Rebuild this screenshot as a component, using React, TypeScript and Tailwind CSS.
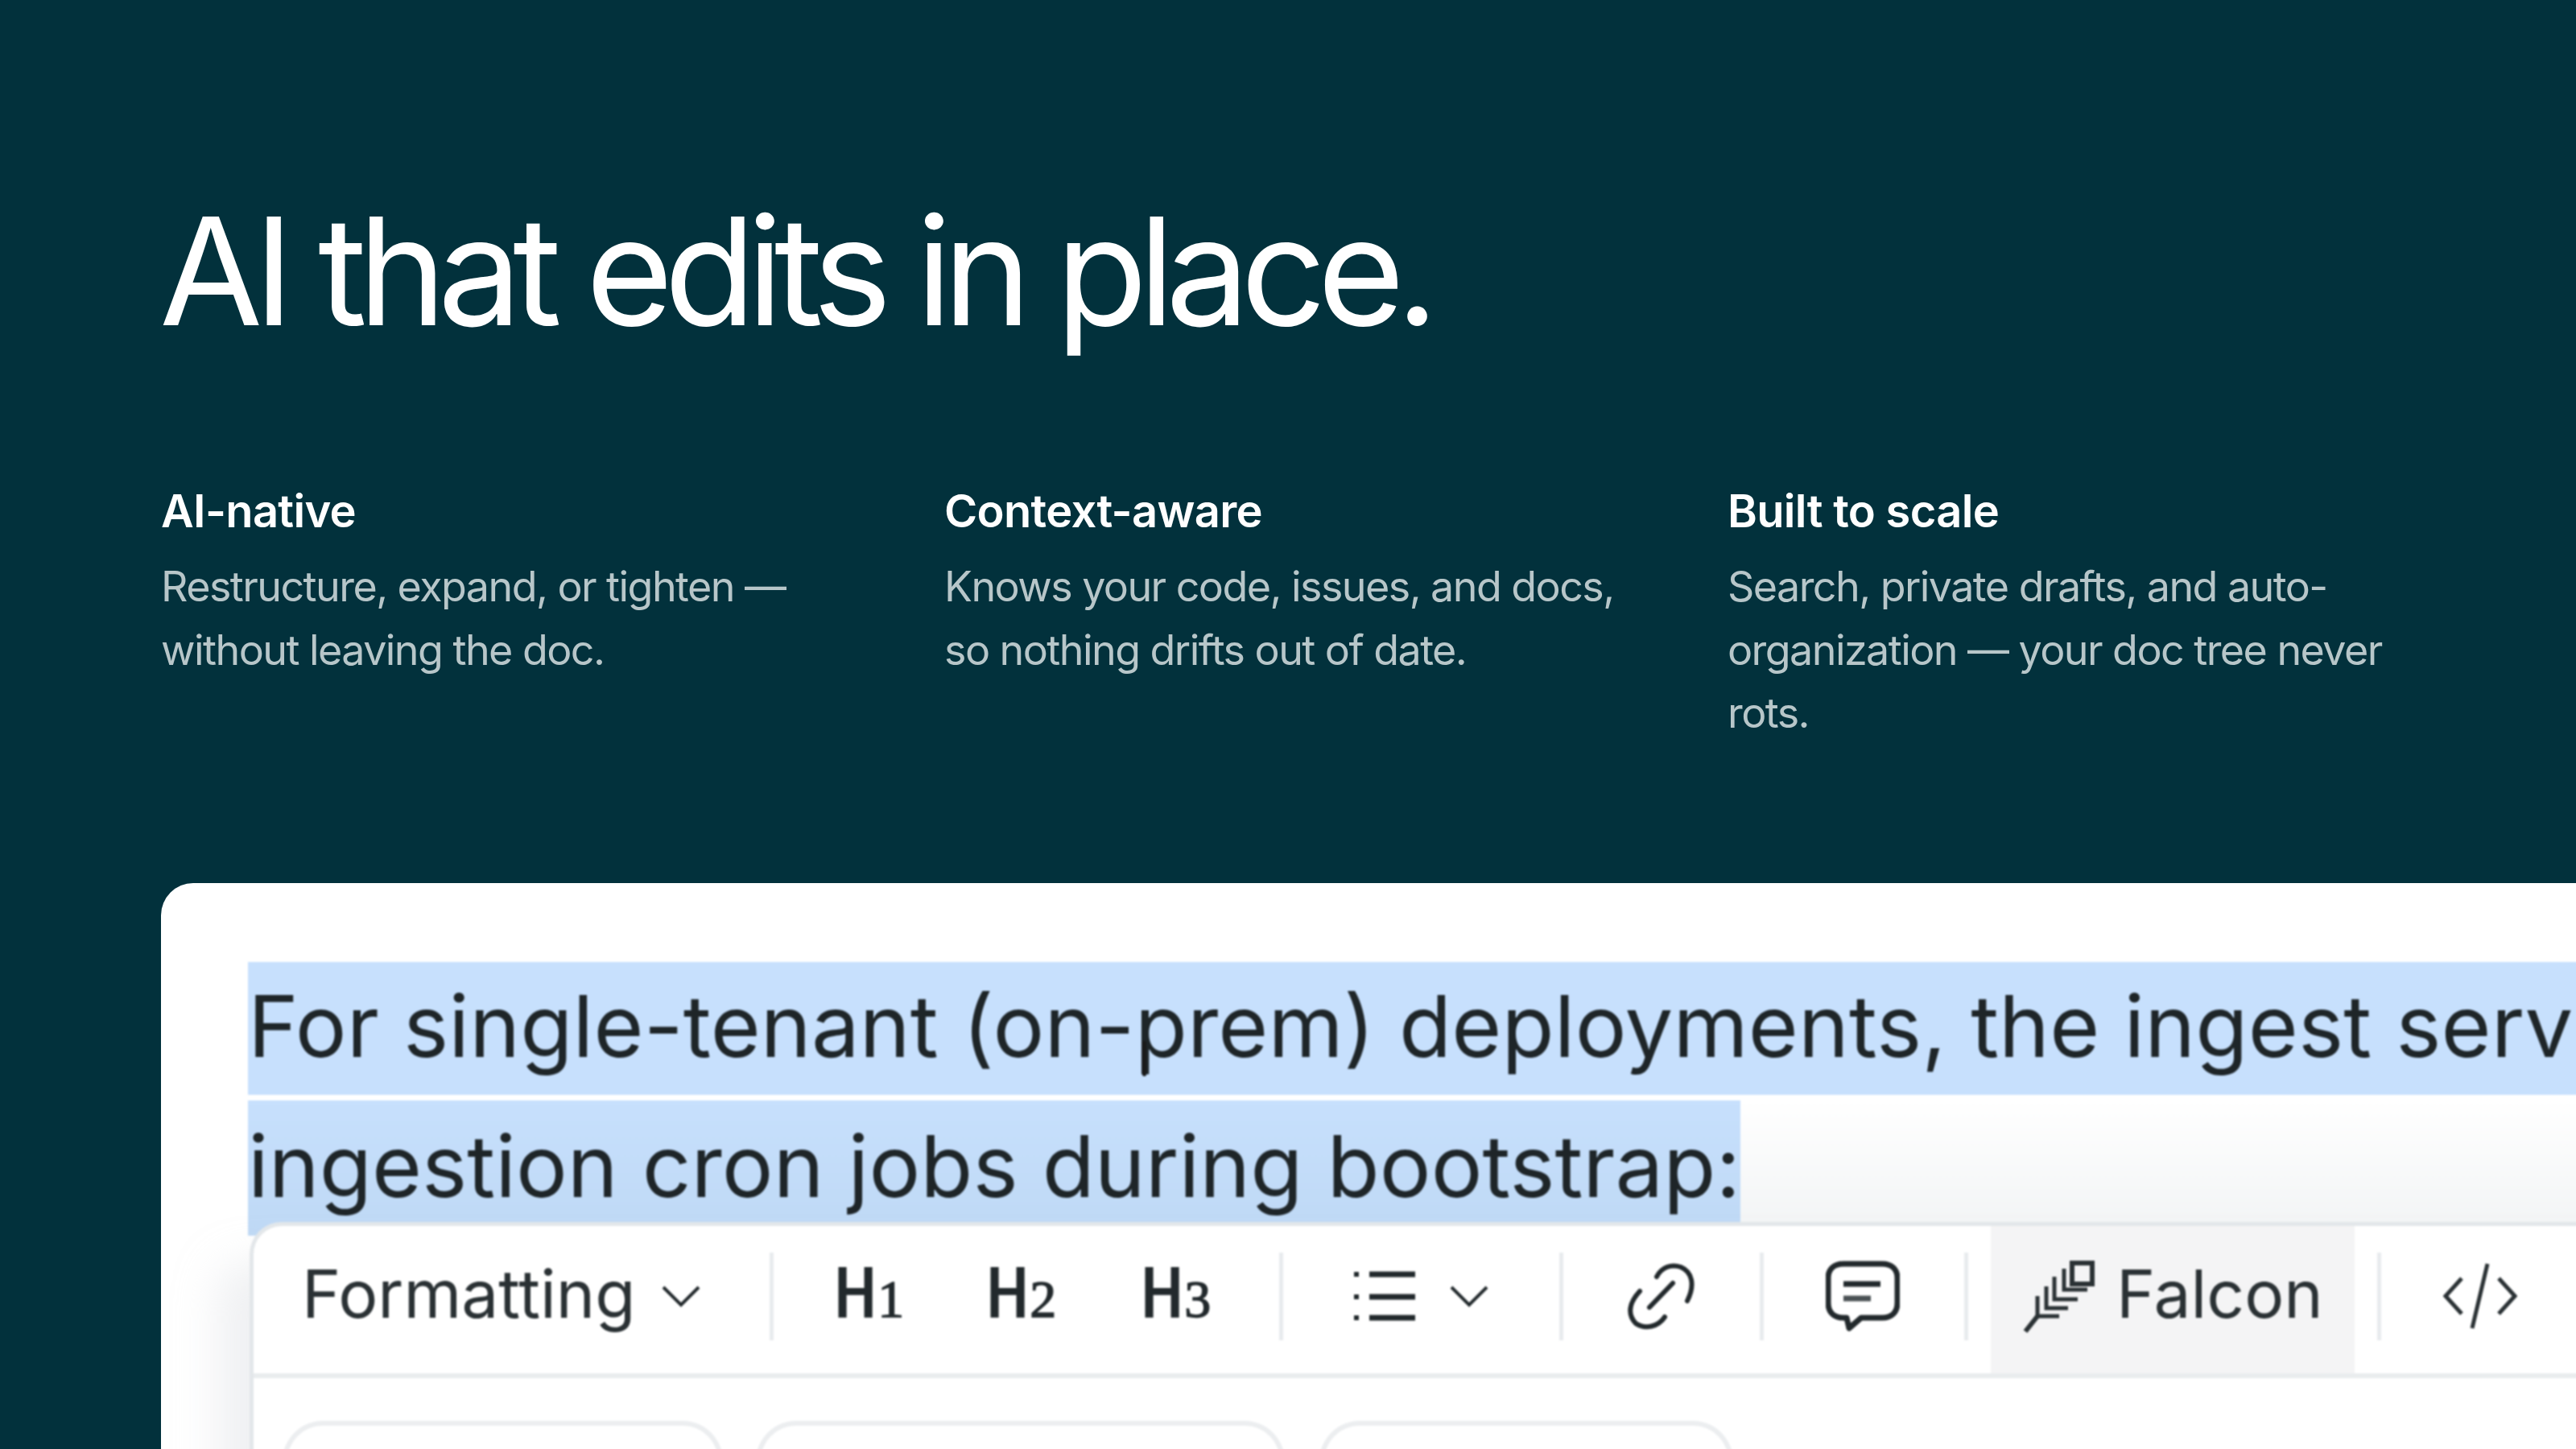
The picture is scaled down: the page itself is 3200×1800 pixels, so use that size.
const inter = { fontFamily: 'Inter, "Noto Sans", sans-serif' };

const features = [
  { title: 'AI-native', body: ['Restructure, expand, or tighten —', 'without leaving the doc.'] },
  { title: 'Context-aware', body: ['Knows your code, issues, and docs,', 'so nothing drifts out of date.'] },
  { title: 'Built to scale', body: ['Search, private drafts, and auto-', 'organization — your doc tree never', 'rots.'] },
];

function Divider({ className }: { className: string }) {
  return <div className={`h-[109px] w-[5px] shrink-0 bg-[#e8ebee] ${className}`} />;
}

function Chevron({ className }: { className: string }) {
  return (
    <svg viewBox="0 0 48 28" className={`h-[28px] w-[48px] shrink-0 ${className}`} fill="none" stroke="#22292c" strokeWidth="4">
      <path d="M2 3 L24 25 L46 3" />
    </svg>
  );
}

function Heading({ level, className }: { level: number; className: string }) {
  return (
    <div className={`mt-[4px] flex w-[96px] shrink-0 items-baseline text-[#22292c] [-webkit-text-stroke:1.5px_#22292c] ${className}`}>
      <span className="font-['Liberation_Mono',monospace] text-[92px] font-normal leading-none">H</span>
      <span className="font-['Liberation_Serif',serif] text-[66px] leading-none">{level}</span>
    </div>
  );
}

function ListIcon({ className }: { className: string }) {
  return (
    <svg viewBox="0 0 78 64" className={`h-[64px] w-[78px] shrink-0 ${className}`} stroke="#22292c" fill="none">
      <path d="M19 5H76M19 33H76M19 59H76" strokeWidth="7" />
      <path d="M3 2V8M3 30V36M3 56V62" strokeWidth="6" />
    </svg>
  );
}

function LinkIcon({ className }: { className: string }) {
  return (
    <svg viewBox="0 0 84 84" className={`h-[84px] w-[84px] shrink-0 ${className}`} fill="none" stroke="#22292c" strokeWidth="6" strokeLinecap="round">
      <path d="M36 18 C42 6 54 2 66 6 C80 12 84 28 74 48" />
      <path d="M56 26 L27 56" />
      <path d="M15 36 C2 50 -1 64 10 76 C22 84 38 80 46 68" />
    </svg>
  );
}

function CommentIcon({ className }: { className: string }) {
  return (
    <svg viewBox="0 0 92 88" className={`h-[88px] w-[92px] shrink-0 ${className}`} fill="none" stroke="#22292c" strokeWidth="7" strokeLinejoin="round">
      <path d="M22 4H70C82 4 89 11 89 22V52C89 64 82 71 70 71H44L29 84L26 71H22C10 71 3 64 3 52V22C3 11 10 4 22 4Z" />
      <path d="M22 29H68" strokeWidth="7" />
      <path d="M22 47H56" strokeWidth="7" stroke="#4a5154" />
    </svg>
  );
}

function FalconIcon() {
  return (
    <svg viewBox="0 0 92 96" className="h-[96px] w-[92px] shrink-0" fill="none" stroke="#2a3134" strokeWidth="5">
      <rect x="63" y="7" width="25" height="26" strokeWidth="6" />
      <path d="M53 14V40H82" />
      <path d="M41 24V52H70" />
      <path d="M31 36V63H58" />
      <path d="M20 48V73H47" />
      <path d="M20 73L5 92" strokeWidth="6" />
    </svg>
  );
}

function CodeIcon({ className }: { className: string }) {
  return (
    <svg viewBox="0 0 92 84" className={`h-[84px] w-[92px] shrink-0 ${className}`} fill="none" stroke="#2a3134" strokeWidth="5">
      <path d="M23 20L3 42L23 64" />
      <path d="M69 20L89 42L69 64" />
      <path d="M55 2L36 82" />
    </svg>
  );
}

export default function App() {
  return (
    <div className="h-[1800px] w-[3200px] overflow-hidden bg-[#02313c] pl-[200px]" style={inter}>
      <h1 className="-ml-[2px] pt-[237px] text-[186px] font-normal leading-[200px] tracking-[-0.06em] text-white">
        AI that edits in place.
      </h1>

      <div className="mt-[162px] flex">
        {features.map((f) => (
          <div key={f.title} className="w-[973px] shrink-0">
            <div className="text-[56px] font-semibold leading-[72px] tracking-[-0.012em] text-white">{f.title}</div>
            <div className="mt-[19px] text-[52px] leading-[78.5px] tracking-[-0.03em] text-[#b7c6c9]">
              {f.body.map((line) => (
                <div key={line}>{line}</div>
              ))}
            </div>
          </div>
        ))}
      </div>

      <div className="mt-[171px] h-[800px] w-[3100px] rounded-tl-[40px] bg-white pl-[108px] pt-[98px]">
        <div className="blur-[1px]">
          <div className="whitespace-nowrap text-[106.5px] text-[#1e2528]">
            <div className="relative h-[165px] bg-[#c7e0fd] leading-[160px] tracking-[0.1px]">
              For single-tenant (on-prem) deployments, the ingest service registers
              {/* mouse cursor sitting on the selection */}
              <div className="absolute left-[1111px] top-[98px] h-[44px] w-[5px] rounded-full bg-[#1a1a1a]" />
            </div>
            <div className="mt-[7px] h-[168px] bg-gradient-to-b from-white to-[#f2f4f5]">
              <div className="h-[168px] w-[1854px] bg-gradient-to-b from-[#c7e0fd] to-[#bfd9f5] leading-[163px]">ingestion cron jobs during bootstrap:</div>
            </div>
          </div>

          <div className="relative -mt-[17px] ml-[2px] rounded-tl-[40px] border-l-[5px] border-t-[5px] border-[#e3e7ea] bg-white shadow-[-40px_50px_50px_rgba(225,228,232,0.5)]">
            <div className="flex h-[189px] items-center border-b-[6px] border-[#e9ecee] pb-[8px] text-[82px] text-[#2a3134]">
              <span className="-mt-[6px] ml-[60px] w-[412px] shrink-0">Formatting</span>
              <Chevron className="ml-[35px]" />
              <Divider className="ml-[86px]" />
              <Heading level={1} className="ml-[74px]" />
              <Heading level={2} className="ml-[93px]" />
              <Heading level={3} className="ml-[96px]" />
              <Divider className="ml-[77px]" />
              <ListIcon className="ml-[88px]" />
              <Chevron className="ml-[41px]" />
              <Divider className="ml-[88px]" />
              <LinkIcon className="ml-[80px]" />
              <Divider className="ml-[80px]" />
              <CommentIcon className="ml-[77px]" />
              <Divider className="ml-[80px]" />
              <div className="-mb-[8px] ml-[28px] flex w-[452px] shrink-0 items-center self-stretch bg-[#f4f4f5] pb-[8px] pl-[38px]">
                <FalconIcon />
                <span className="-mt-[6px] ml-[26px]">Falcon</span>
              </div>
              <Divider className="ml-[28px]" />
              <CodeIcon className="ml-[77px]" />
            </div>

            <div className="flex pl-[36px] pt-[53px]">
              <div className="h-[120px] w-[547px] shrink-0 rounded-t-[50px] border-[6px] border-b-0 border-[#eceef0]" />
              <div className="ml-[41px] h-[120px] w-[657px] shrink-0 rounded-t-[50px] border-[6px] border-b-0 border-[#eceef0]" />
              <div className="ml-[43px] h-[120px] w-[514px] shrink-0 rounded-t-[50px] border-[6px] border-b-0 border-[#eceef0]" />
            </div>
          </div>
        </div>
      </div>
    </div>
  );
}
